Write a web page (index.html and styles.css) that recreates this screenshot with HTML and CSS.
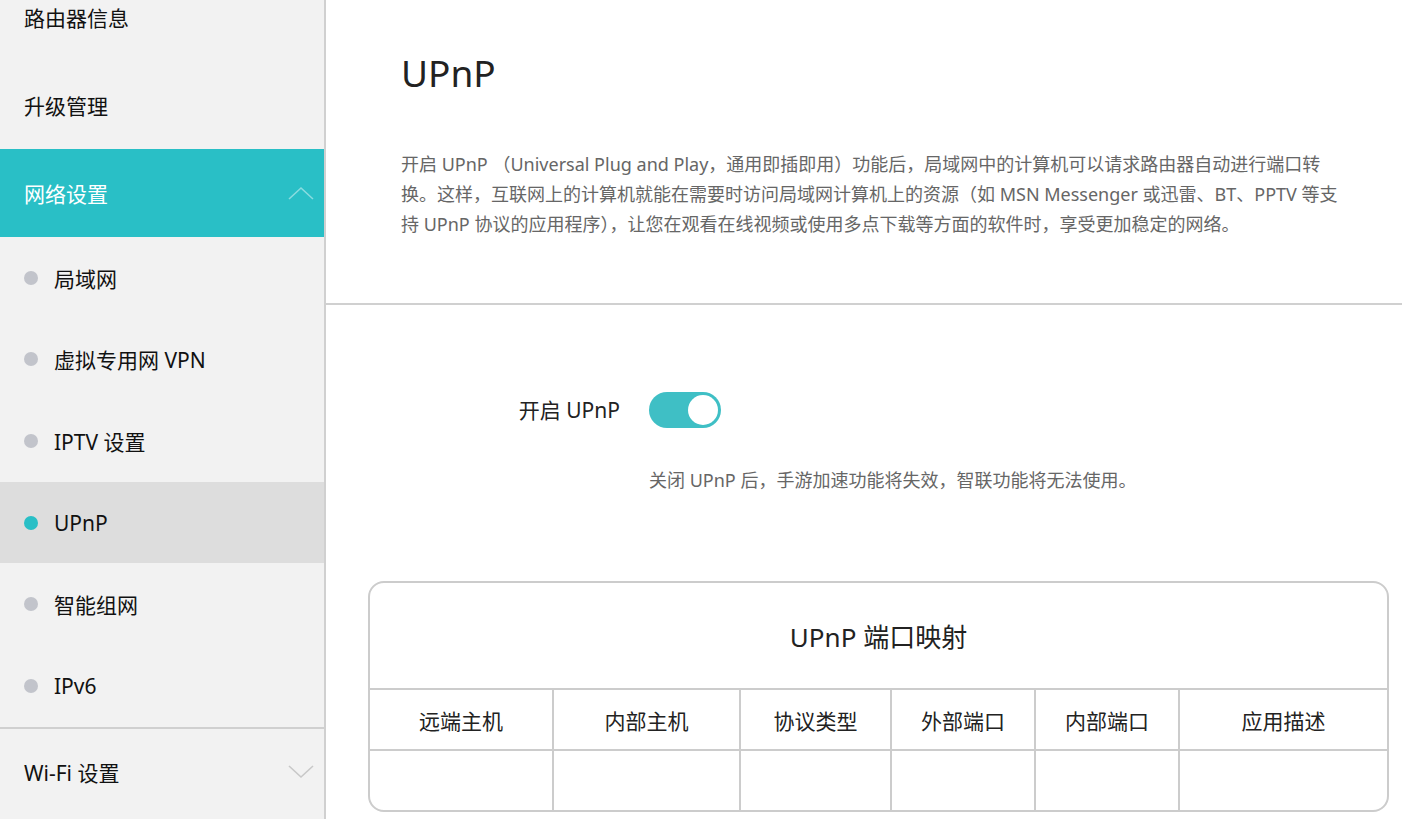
FILE: index.html
```html
<!DOCTYPE html>
<html lang="zh-CN">

<head>
    <meta charset="UTF-8" />
    <meta name="viewport" content="width=device-width, initial-scale=1.0" />
    <title>UPnP</title>
    <link rel="stylesheet" href="styles.css">
</head>

<body>
    <div id="sidebar">
        <ul class="menu">
            <li class="menu-item">路由器信息</li>
            <li class="menu-item">升级管理</li>
            <li class="menu-item open">
                网络设置
                <svg class="chevron" width="26" height="14" viewBox="0 0 26 14">
                    <polyline points="1,13 13,2 25,13" fill="none" stroke="rgba(255,255,255,0.45)" stroke-width="1.6" />
                </svg>
            </li>
            <li class="sub-item"><span class="dot"></span>局域网</li>
            <li class="sub-item"><span class="dot"></span>虚拟专用网 VPN</li>
            <li class="sub-item"><span class="dot"></span>IPTV 设置</li>
            <li class="sub-item active"><span class="dot"></span>UPnP</li>
            <li class="sub-item"><span class="dot"></span>智能组网</li>
            <li class="sub-item"><span class="dot"></span>IPv6</li>
            <li class="menu-item group">
                Wi-Fi 设置
                <svg class="chevron" width="26" height="14" viewBox="0 0 26 14">
                    <polyline points="1,1 13,12 25,1" fill="none" stroke="#c8c8c8" stroke-width="1.6" />
                </svg>
            </li>
        </ul>
    </div>

    <div id="main">
        <div class="page-head">
            <h1>UPnP</h1>
            <p class="intro">开启 UPnP （Universal Plug and Play，通用即插即用）功能后，局域网中的计算机可以请求路由器自动进行端口转换。这样，互联网上的计算机就能在需要时访问局域网计算机上的资源（如 MSN Messenger 或迅雷、BT、PPTV 等支持 UPnP 协议的应用程序），让您在观看在线视频或使用多点下载等方面的软件时，享受更加稳定的网络。</p>
        </div>

        <div class="form-row">
            <label class="form-label">开启 UPnP</label>
            <div class="switch on" id="upnpSwitch"><span class="knob"></span></div>
        </div>
        <p class="hint">关闭 UPnP 后，手游加速功能将失效，智联功能将无法使用。</p>

        <div class="map-card">
            <div class="map-title">UPnP 端口映射</div>
            <table class="map-table">
                <colgroup>
                    <col style="width:183px">
                    <col style="width:187px">
                    <col style="width:151px">
                    <col style="width:144px">
                    <col style="width:144px">
                    <col>
                </colgroup>
                <tr>
                    <th>远端主机</th>
                    <th>内部主机</th>
                    <th>协议类型</th>
                    <th>外部端口</th>
                    <th>内部端口</th>
                    <th>应用描述</th>
                </tr>
                <tr>
                    <td></td>
                    <td></td>
                    <td></td>
                    <td></td>
                    <td></td>
                    <td></td>
                </tr>
            </table>
        </div>
    </div>

    <script>
        const upnpSwitch = document.getElementById('upnpSwitch');
        upnpSwitch.addEventListener('click', function () {
            upnpSwitch.classList.toggle('on');
        });
    </script>
</body>

</html>
```

FILE: styles.css
```css
body {
    margin: 0;
    padding: 0;
    display: flex;
    height: 100vh;
    overflow: hidden;
    font-family: "Noto Sans", "Noto Sans CJK SC", sans-serif;
    color: #222;
    background: #fff;
}

/* sidebar */
#sidebar {
    width: 324px;
    flex-shrink: 0;
    background-color: #f2f2f2;
    border-right: 2px solid #d0d0d0;
    overflow: hidden;
}

.menu {
    list-style: none;
    margin: -27px 0 0 0;
    padding: 0;
}

.menu-item {
    height: 88px;
    display: flex;
    align-items: center;
    justify-content: space-between;
    padding: 0 10px 0 24px;
    font-size: 21px;
    color: #111;
}

.menu-item.open {
    background-color: #29bfc6;
    color: #fff;
}

.menu-item.group {
    border-top: 2px solid #d0d0d0;
    height: 86px;
}

.sub-item {
    height: 81.6px;
    display: flex;
    align-items: center;
    padding-left: 24px;
    font-size: 21px;
    color: #111;
}

.sub-item.active {
    background-color: #dddddd;
}

.dot {
    width: 14px;
    height: 14px;
    border-radius: 50%;
    background-color: #c2c4cb;
    margin-right: 16px;
}

.sub-item.active .dot {
    background-color: #29bfc6;
}

/* main */
#main {
    flex: 1;
}

.page-head {
    padding: 48px 40px 64px 75px;
    border-bottom: 2px solid #d0d0d0;
}

h1 {
    margin: 0;
    font-size: 37px;
    font-weight: normal;
    line-height: 50px;
    color: #222;
}

.intro {
    margin: 51px 0 0 0;
    width: 945px;
    font-size: 18px;
    line-height: 30px;
    color: #666;
}

.form-row {
    display: flex;
    align-items: center;
    margin-top: 87px;
    padding-left: 75px;
}

.form-label {
    width: 219px;
    text-align: right;
    margin-right: 29px;
    font-size: 21px;
    line-height: 36px;
}

.switch {
    width: 72px;
    height: 36px;
    border-radius: 18px;
    background-color: #ccc;
    position: relative;
    cursor: pointer;
}

.switch.on {
    background-color: #3fbfc5;
}

.knob {
    position: absolute;
    top: 3px;
    left: 3px;
    width: 30px;
    height: 30px;
    border-radius: 50%;
    background-color: #fff;
}

.switch.on .knob {
    left: 39px;
}

.hint {
    margin: 40px 0 0 323px;
    font-size: 18px;
    line-height: 24px;
    color: #666;
}

.map-card {
    margin: 89px 13px 0 42px;
    border: 2px solid #cccccc;
    border-radius: 16px;
    overflow: hidden;
}

.map-title {
    height: 105px;
    line-height: 108px;
    text-align: center;
    font-size: 26px;
    color: #222;
    border-bottom: 2px solid #cccccc;
}

.map-table {
    width: 100%;
    border-collapse: collapse;
    table-layout: fixed;
}

.map-table th,
.map-table td {
    height: 59px;
    border: 2px solid #cccccc;
    font-size: 21px;
    font-weight: normal;
    color: #222;
    text-align: center;
    padding: 0;
}

.map-table tr:first-child th {
    border-top: none;
}

.map-table th:first-child,
.map-table td:first-child {
    border-left: none;
}

.map-table th:last-child,
.map-table td:last-child {
    border-right: none;
}

.map-table tr:last-child td {
    border-bottom: none;
}
```
